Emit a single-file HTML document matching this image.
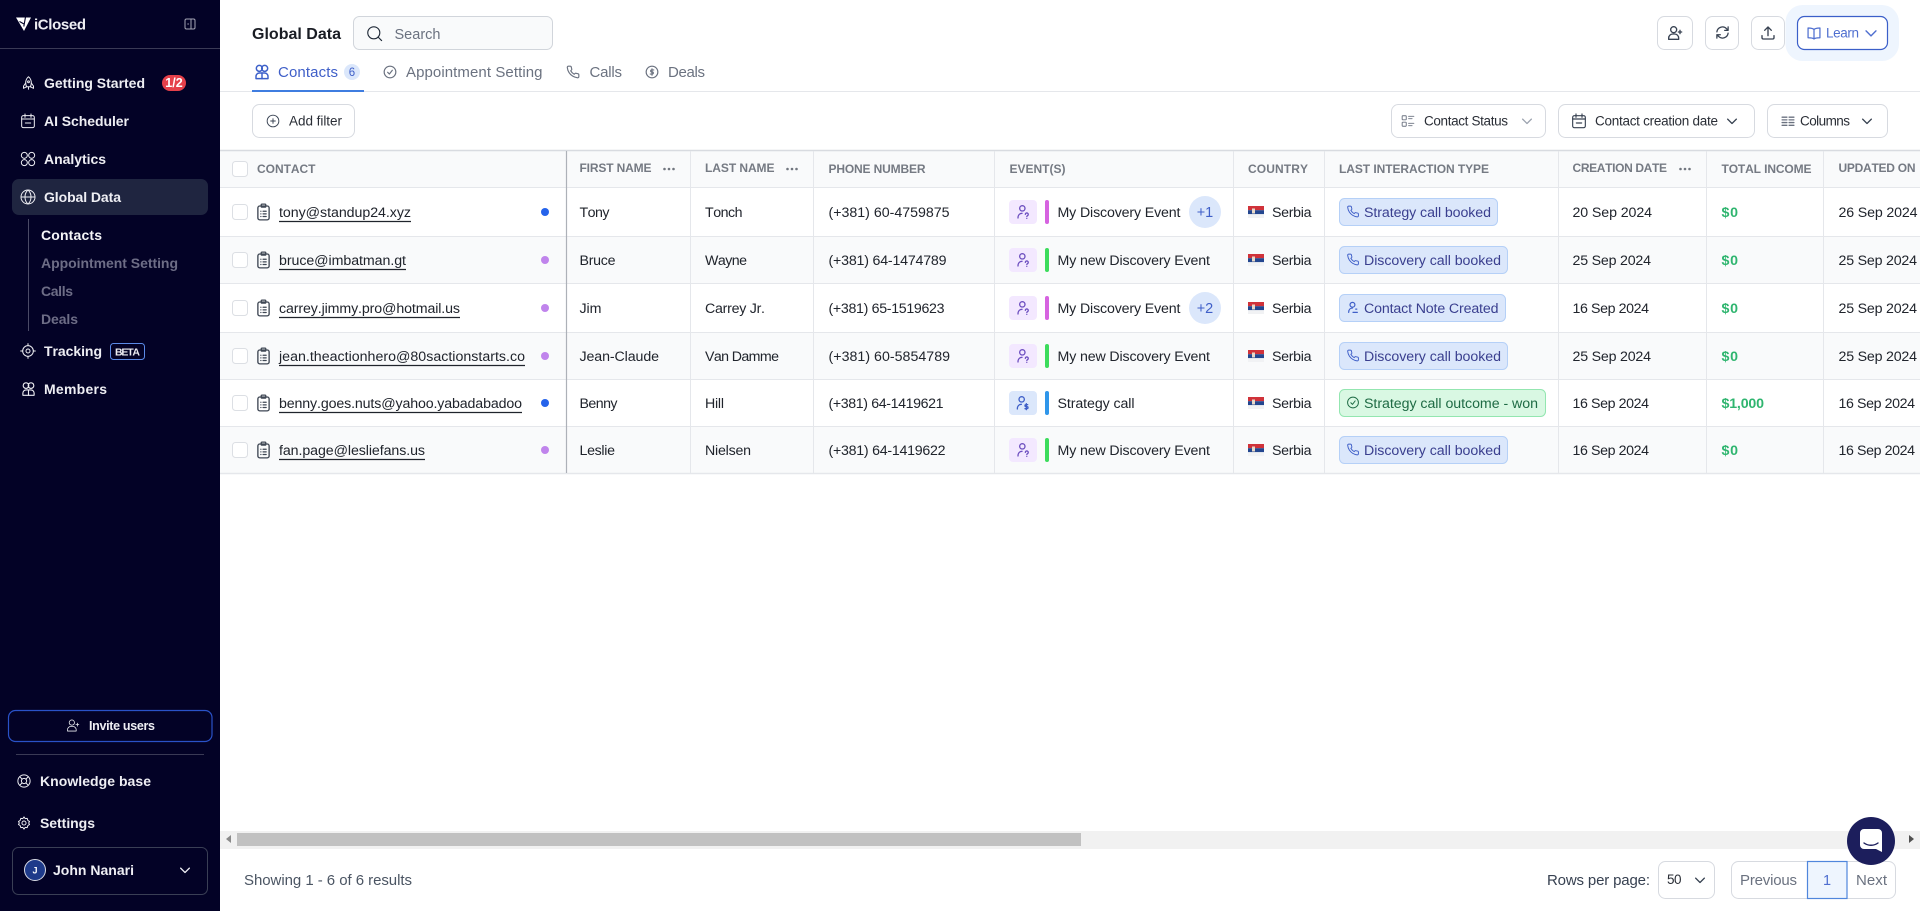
<!DOCTYPE html>
<html lang="en"><head><meta charset="utf-8"><title>Global Data</title>
<style>
html,body{margin:0;padding:0;background:#fff;overflow:hidden}
svg{display:block}
text{font-family:"Liberation Sans",sans-serif;font-kerning:none}
.c{font-size:14.2px;fill:#20242c}
.h{font-size:12px;font-weight:700;fill:#757a83}
.n{font-size:14px;font-weight:700;fill:#eeeef3}
.s{font-size:14px;font-weight:700;fill:#6d6d86}
.t{font-size:15px;fill:#6b7280}
.p{font-size:14.2px;fill:#3a3f8f}
.g{font-size:14.2px;fill:#1f6b45}
.m{font-size:14.2px;font-weight:700;fill:#2fb56f}
.i{fill:none;stroke-width:2;stroke-linecap:round;stroke-linejoin:round}
.box{fill:#fff;stroke:#d7dae0}
.cb{fill:#fff;stroke:#dcdfe4}
.u{stroke:#20242c;stroke-width:1.2}
</style></head><body>
<svg width="1920" height="911" viewBox="0 0 1920 911" xmlns="http://www.w3.org/2000/svg">
<defs>
<symbol id="chev" viewBox="0 0 24 24"><path d="M5 9l7 7 7-7"/></symbol>
<symbol id="phone" viewBox="0 0 24 24"><path d="M22 16.9v3a2 2 0 0 1-2.200 2 19.800 19.800 0 0 1-8.600-3 19.500 19.500 0 0 1-6-6 19.800 19.800 0 0 1-3-8.700A2 2 0 0 1 4.100 2h3a2 2 0 0 1 2 1.700c.1 1 .4 1.900.7 2.800a2 2 0 0 1-.4 2.100L8.100 9.900a16 16 0 0 0 6 6l1.300-1.300a2 2 0 0 1 2.100-.4c.9.300 1.800.6 2.800.7A2 2 0 0 1 22 16.900z"/></symbol>
<symbol id="check" viewBox="0 0 24 24"><circle cx="12" cy="12" r="10"/><path d="M8 12.500l3 3 5-6.500"/></symbol>
<symbol id="note" viewBox="0 0 24 24"><circle cx="11" cy="7" r="4.500"/><path d="M4 21c0-5 3-8 7-8"/><path d="M12 21h8M17 15l2 0"/></symbol>
<symbol id="clip" viewBox="0 0 18 24"><rect x="1.500" y="4" width="15" height="18.500" rx="2.500"/><rect x="6" y="1.500" width="6" height="4" rx="1"/><path d="M5.500 11h.01M5.500 14.500h.01M5.500 18h.01M8.500 11h4M8.500 14.500h4M8.500 18h4"/></symbol>
<symbol id="userq" viewBox="0 0 24 24"><circle cx="11" cy="6.500" r="4"/><path d="M4.500 21c0-4.500 2.500-7 6-7"/><path d="M15.500 15.500a2.200 2.200 0 1 1 3.300 2l-1.100 1M17.700 21.500v.01"/></symbol>
<symbol id="userd" viewBox="0 0 24 24"><circle cx="10" cy="6.500" r="4"/><path d="M3.500 21c0-4.500 2.500-7 6-7"/><path d="M19 14.500h-2.500a1.500 1.500 0 0 0 0 3h1.500a1.500 1.500 0 0 1 0 3H15M17 13v9"/></symbol>
<symbol id="users" viewBox="0 0 24 24"><circle cx="8" cy="6.500" r="4.500"/><circle cx="16" cy="6.500" r="4.500"/><path d="M3 22v-3.500a5 5 0 0 1 5-5h8a5 5 0 0 1 5 5V22z"/><path d="M12 13.500V22"/></symbol>
<symbol id="useradd" viewBox="0 0 24 24"><circle cx="10" cy="7" r="4.500"/><path d="M2.500 21.500v-2a6 6 0 0 1 6-6h3a6 6 0 0 1 6 6v2z"/><path d="M19.500 8v5M17 10.500h5"/></symbol>
<symbol id="dollar" viewBox="0 0 24 24"><circle cx="12" cy="12" r="10"/><path d="M15 8.500h-4a1.800 1.800 0 0 0 0 3.500h2a1.800 1.800 0 0 1 0 3.500H9M12 6.500v11"/></symbol>
<symbol id="plusc" viewBox="0 0 24 24"><circle cx="12" cy="12" r="10"/><path d="M12 8v8M8 12h8"/></symbol>
<symbol id="search" viewBox="0 0 24 24"><circle cx="11" cy="11" r="8.500"/><path d="M17.500 17.500L22 22"/></symbol>
<symbol id="sync" viewBox="0 0 24 24"><path d="M3 11a9 9 0 0 1 15.500-5L21 8.500M21 3v5.500h-5.500"/><path d="M21 13a9 9 0 0 1-15.500 5L3 15.500M3 21v-5.500h5.500"/></symbol>
<symbol id="upload" viewBox="0 0 24 24"><path d="M12 16V3M7 8l5-5 5 5M3 16v3a2 2 0 0 0 2 2h14a2 2 0 0 0 2-2v-3"/></symbol>
<symbol id="book" viewBox="0 0 24 24"><path d="M12 6.500C10.500 4.500 7 4 2.500 4v15.500c4.500 0 8 .5 9.500 2 1.500-1.500 5-2 9.500-2V4C17 4 13.500 4.500 12 6.500zM12 6.500v15"/></symbol>
<symbol id="status" viewBox="0 0 24 24"><rect x="2" y="3" width="7" height="7" rx="1"/><rect x="2" y="14" width="7" height="7" rx="1"/><path d="M13 4h9M13 8h6M13 16h9M13 20h6"/></symbol>
<symbol id="cal" viewBox="0 0 24 24"><rect x="2.500" y="4" width="19" height="18" rx="2.500"/><path d="M7.500 1.500v5M16.500 1.500v5M2.500 9h19M8 15h8"/></symbol>
<symbol id="cols" viewBox="0 0 24 24"><path d="M1 4h9M1 9h9M1 14h9M1 19h9M14 4h9M14 9h9M14 14h9M14 19h9"/></symbol>
<symbol id="rocket" viewBox="0 0 24 24"><path d="M12 2c3 2.500 4.500 6 4.500 9.500 0 2.500-.7 4.800-1.500 6.500H9c-.8-1.700-1.500-4-1.500-6.500C7.500 8 9 4.500 12 2z"/><circle cx="12" cy="10" r="1.500"/><path d="M7.500 12L4 17v3.500l5-2.500M16.500 12l3.500 5v3.500L15 18M12 19v3"/></symbol>
<symbol id="grid4" viewBox="0 0 24 24"><circle cx="6.500" cy="6.500" r="4.500"/><circle cx="17.500" cy="6.500" r="4.500"/><circle cx="6.500" cy="17.500" r="4.500"/><circle cx="17.500" cy="17.500" r="4.500"/></symbol>
<symbol id="globe" viewBox="0 0 24 24"><circle cx="12" cy="12" r="10.500"/><path d="M1.500 12h21M12 1.500c3.500 3 4.500 6.500 4.500 10.500s-1 7.500-4.500 10.500C8.500 19.500 7.500 16 7.500 12S8.500 4.500 12 1.500z"/></symbol>
<symbol id="target" viewBox="0 0 24 24"><circle cx="12" cy="12" r="8"/><circle cx="12" cy="12" r="3"/><path d="M12 1v3M12 20v3M1 12h3M20 12h3"/></symbol>
<symbol id="life" viewBox="0 0 24 24"><circle cx="12" cy="12" r="10.500"/><circle cx="12" cy="12" r="4.500"/><path d="M4.600 4.600l4.200 4.200M15.200 15.200l4.200 4.200M19.400 4.600l-4.200 4.200M8.800 15.200l-4.200 4.200"/></symbol>
<symbol id="gear" viewBox="0 0 24 24"><circle cx="12" cy="12" r="3.500"/><path d="M12 1.500l2 3 3.500-.5 1 3.500 3 2-1.500 2.500 1.500 2.500-3 2-1 3.500-3.500-.5-2 3-2-3-3.500.5-1-3.500-3-2L4 12l-1.500-2.500 3-2 1-3.500 3.500.5z"/></symbol>
<symbol id="panel" viewBox="0 0 24 24"><rect x="2" y="2" width="20" height="20" rx="3"/><path d="M14 2v20M9 12l-1.500 0"/></symbol>
<g id="dots" fill="#71767f"><circle cx="-4.500" r="1.300"/><circle r="1.300"/><circle cx="4.500" r="1.300"/></g>
<g id="flag"><rect width="16" height="4.200" fill="#d0323a"/><rect y="4.200" width="16" height="4" fill="#23468f"/><rect y="8.200" width="16" height="3.800" fill="#f1f2f4"/><rect x="4" y="2.500" width="3" height="5" fill="#e8d9c8"/></g>
</defs>

<!-- main bg -->
<rect width="1920" height="911" fill="#fff"/>

<!-- header -->
<text x="252" y="39" font-size="16" font-weight="700" fill="#1a1d24" textLength="89">Global Data</text>
<rect x="353.500" y="16.500" width="199" height="33" rx="6" fill="#f9fafb" stroke="#d1d5db"/>
<use href="#search" x="366" y="25" width="17" height="17" class="i" stroke="#1f2937" style="stroke-width:1.600"/>
<text x="394.500" y="39" font-size="14.500" fill="#6b7280" textLength="46">Search</text>

<line x1="220" y1="91.500" x2="1920" y2="91.500" stroke="#e5e7eb"/>
<rect x="252" y="90" width="112" height="2" fill="#3f7de0"/>
<use href="#users" x="254" y="64" width="16" height="16" class="i" stroke="#3b5fc9" style="stroke-width:2.200"/>
<text x="278" y="77" class="t" style="fill:#3f5fc8" textLength="60">Contacts</text>
<circle cx="352" cy="72" r="8" fill="#dbe7fb"/>
<text x="352" y="76" font-size="11.500" fill="#3f5fc8" text-anchor="middle">6</text>
<use href="#check" x="383" y="65" width="14" height="14" class="i" stroke="#6b7280"/>
<text x="406" y="77" class="t" textLength="136.500">Appointment Setting</text>
<use href="#phone" x="566" y="65" width="14" height="14" class="i" stroke="#6b7280"/>
<text x="589.500" y="77" class="t" textLength="32.500">Calls</text>
<use href="#dollar" x="645" y="65" width="14" height="14" class="i" stroke="#6b7280"/>
<text x="668" y="77" class="t" textLength="37">Deals</text>

<!-- header buttons -->
<rect x="1657.500" y="16.500" width="35" height="33" rx="7" class="box"/>
<use href="#useradd" x="1667" y="25" width="16" height="16" class="i" stroke="#374151"/>
<rect x="1705.500" y="16.500" width="33" height="33" rx="7" class="box"/>
<use href="#sync" x="1715" y="25" width="15" height="15" class="i" stroke="#374151"/>
<rect x="1751.500" y="16.500" width="33" height="33" rx="7" class="box"/>
<use href="#upload" x="1760" y="25" width="16" height="16" class="i" stroke="#374151"/>
<rect x="1785.500" y="5" width="113.500" height="56" rx="17" fill="#eef5fe"/>
<rect x="1797.500" y="16.500" width="90" height="33" rx="7" fill="#fff" stroke="#3b5fc9" stroke-width="1.200"/>
<use href="#book" x="1806.500" y="25.500" width="15" height="15" class="i" stroke="#4f6fd0"/>
<text x="1826" y="37.500" font-size="13.500" fill="#4f6fd0" textLength="33">Learn</text>
<use href="#chev" x="1862.500" y="24.500" width="17" height="17" class="i" stroke="#4f6fd0"/>

<!-- toolbar -->
<rect x="252.500" y="104.500" width="102" height="33" rx="7" class="box"/>
<use href="#plusc" x="266" y="114" width="14" height="14" class="i" stroke="#374151" style="stroke-width:1.600"/>
<text x="289" y="125.500" font-size="13.500" fill="#2a2e36" textLength="53">Add filter</text>

<rect x="1391.500" y="104.500" width="154" height="33" rx="7" class="box"/>
<use href="#status" x="1401" y="114" width="14" height="14" class="i" stroke="#6b7280" style="stroke-width:1.600"/>
<text x="1424" y="125.500" font-size="13.500" fill="#2a2e36" textLength="84">Contact Status</text>
<use href="#chev" x="1519.500" y="113.500" width="15" height="15" class="i" stroke="#9ca3af"/>

<rect x="1558.500" y="104.500" width="196" height="33" rx="7" class="box"/>
<use href="#cal" x="1571" y="113" width="16" height="16" class="i" stroke="#374151" style="stroke-width:1.700"/>
<text x="1595" y="125.500" font-size="13.500" fill="#2a2e36" textLength="123">Contact creation date</text>
<use href="#chev" x="1724.500" y="113.500" width="15" height="15" class="i" stroke="#374151"/>

<rect x="1767.500" y="104.500" width="120" height="33" rx="7" class="box"/>
<use href="#cols" x="1781.500" y="115" width="13" height="13" class="i" stroke="#6b7280" style="stroke-width:2.400"/>
<text x="1800" y="125.500" font-size="13.500" fill="#2a2e36" textLength="50">Columns</text>
<use href="#chev" x="1859.500" y="113.500" width="15" height="15" class="i" stroke="#374151"/>

<!-- table backgrounds -->
<rect x="220" y="151" width="1700" height="36" fill="#f9fafb"/>
<rect x="220" y="237" width="1700" height="46" fill="#f9fafb"/>
<rect x="220" y="333" width="1700" height="46" fill="#f9fafb"/>
<rect x="220" y="427" width="1700" height="46" fill="#f9fafb"/>
<g stroke="#e5e7eb">
<line x1="220" y1="150.500" x2="1920" y2="150.500" stroke="#d8dbe0" stroke-width="1.500"/>
<line x1="220" y1="187.500" x2="1920" y2="187.500"/>
<line x1="220" y1="236.500" x2="1920" y2="236.500"/>
<line x1="220" y1="283.500" x2="1920" y2="283.500"/>
<line x1="220" y1="332.500" x2="1920" y2="332.500"/>
<line x1="220" y1="379.500" x2="1920" y2="379.500"/>
<line x1="220" y1="426.500" x2="1920" y2="426.500"/>
<line x1="220" y1="473.500" x2="1920" y2="473.500" stroke-width="1.500"/>
<line x1="690.500" y1="151" x2="690.500" y2="473"/>
<line x1="813.500" y1="151" x2="813.500" y2="473"/>
<line x1="994.500" y1="151" x2="994.500" y2="473"/>
<line x1="1233.500" y1="151" x2="1233.500" y2="473"/>
<line x1="1324.500" y1="151" x2="1324.500" y2="473"/>
<line x1="1558.500" y1="151" x2="1558.500" y2="473"/>
<line x1="1706.500" y1="151" x2="1706.500" y2="473"/>
<line x1="1823.500" y1="151" x2="1823.500" y2="473"/>
</g>
<line x1="566.500" y1="151" x2="566.500" y2="473" stroke="#adb1b8" stroke-width="1.200"/>

<!-- table head -->
<rect x="232.500" y="161.500" width="15" height="15" rx="3" class="cb"/>
<text x="257" y="173" class="h" textLength="58.500">CONTACT</text>
<text x="579.500" y="172" class="h" textLength="72">FIRST NAME</text>
<use href="#dots" x="669" y="169"/>
<text x="705" y="172" class="h" textLength="69.500">LAST NAME</text>
<use href="#dots" x="792" y="169"/>
<text x="828.500" y="173" class="h" textLength="97">PHONE NUMBER</text>
<text x="1009.500" y="173" class="h" textLength="56">EVENT(S)</text>
<text x="1248" y="173" class="h" textLength="60">COUNTRY</text>
<text x="1339" y="173" class="h" textLength="150">LAST INTERACTION TYPE</text>
<text x="1572.500" y="172" class="h" textLength="94.500">CREATION DATE</text>
<use href="#dots" x="1685" y="169"/>
<text x="1721.500" y="173" class="h" textLength="90">TOTAL INCOME</text>
<text x="1838.500" y="172" class="h" textLength="77">UPDATED ON</text>

<!-- row 1 -->
<rect x="232.500" y="204.500" width="15" height="15" rx="3" class="cb"/>
<use href="#clip" x="256.500" y="203" width="14" height="18" class="i" stroke="#3f4754" style="stroke-width:1.800"/>
<text x="279" y="217" class="c" textLength="132">tony@standup24.xyz</text><line x1="279" y1="221.500" x2="411" y2="221.500" class="u"/>
<circle cx="545" cy="212" r="4" fill="#2563eb"/>
<text x="579.500" y="217" class="c" textLength="30">Tony</text>
<text x="705" y="217" class="c" textLength="37.500">Tonch</text>
<text x="828.500" y="217" class="c" textLength="121">(+381) 60-4759875</text>
<rect x="1009" y="200" width="28" height="24" rx="4" fill="#f3e8ff"/>
<use href="#userq" x="1015" y="204" width="16" height="16" class="i" stroke="#6d4fc0"/>
<rect x="1045" y="200" width="4" height="24" rx="2" fill="#d663e0"/>
<text x="1057.500" y="217" class="c" textLength="123">My Discovery Event</text>
<circle cx="1205" cy="212" r="16" fill="#dbe7fb"/>
<text x="1205" y="217" font-size="14.500" fill="#3f5fc8" text-anchor="middle">+1</text>
<use href="#flag" x="1248" y="206"/>
<text x="1272" y="217" class="c" textLength="39.500">Serbia</text>
<rect x="1339.500" y="198.500" width="158" height="27" rx="5" fill="#dbe7fb" stroke="#b5d0f7"/>
<use href="#phone" x="1346.500" y="205" width="13" height="13" class="i" stroke="#3f5fc8" style="stroke-width:1.800"/>
<text x="1364" y="217" class="p" textLength="127">Strategy call booked</text>
<text x="1572.500" y="217" class="c" textLength="79.500">20 Sep 2024</text>
<text x="1721.500" y="217" class="m" textLength="16.500">$0</text>
<text x="1838.500" y="217" class="c" textLength="79">26 Sep 2024</text>

<!-- row 2 -->
<rect x="232.500" y="252.500" width="15" height="15" rx="3" class="cb"/>
<use href="#clip" x="256.500" y="251" width="14" height="18" class="i" stroke="#3f4754" style="stroke-width:1.800"/>
<text x="279" y="265" class="c" textLength="127">bruce@imbatman.gt</text><line x1="279" y1="269.500" x2="406" y2="269.500" class="u"/>
<circle cx="545" cy="260" r="4" fill="#c084ec"/>
<text x="579.500" y="265" class="c" textLength="36">Bruce</text>
<text x="705" y="265" class="c" textLength="42">Wayne</text>
<text x="828.500" y="265" class="c" textLength="118">(+381) 64-1474789</text>
<rect x="1009" y="248" width="28" height="24" rx="4" fill="#f3e8ff"/>
<use href="#userq" x="1015" y="252" width="16" height="16" class="i" stroke="#6d4fc0"/>
<rect x="1045" y="248" width="4" height="24" rx="2" fill="#3ddc5c"/>
<text x="1057.500" y="265" class="c" textLength="152.500">My new Discovery Event</text>
<use href="#flag" x="1248" y="254"/>
<text x="1272" y="265" class="c" textLength="39.500">Serbia</text>
<rect x="1339.500" y="246.500" width="168" height="27" rx="5" fill="#dbe7fb" stroke="#b5d0f7"/>
<use href="#phone" x="1346.500" y="253" width="13" height="13" class="i" stroke="#3f5fc8" style="stroke-width:1.800"/>
<text x="1364" y="265" class="p" textLength="137">Discovery call booked</text>
<text x="1572.500" y="265" class="c" textLength="78.500">25 Sep 2024</text>
<text x="1721.500" y="265" class="m" textLength="16.500">$0</text>
<text x="1838.500" y="265" class="c" textLength="78.500">25 Sep 2024</text>

<!-- row 3 -->
<rect x="232.500" y="300.500" width="15" height="15" rx="3" class="cb"/>
<use href="#clip" x="256.500" y="299" width="14" height="18" class="i" stroke="#3f4754" style="stroke-width:1.800"/>
<text x="279" y="313" class="c" textLength="181">carrey.jimmy.pro@hotmail.us</text><line x1="279" y1="317.500" x2="460" y2="317.500" class="u"/>
<circle cx="545" cy="308" r="4" fill="#c084ec"/>
<text x="579.500" y="313" class="c" textLength="22">Jim</text>
<text x="705" y="313" class="c" textLength="60">Carrey Jr.</text>
<text x="828.500" y="313" class="c" textLength="116">(+381) 65-1519623</text>
<rect x="1009" y="296" width="28" height="24" rx="4" fill="#f3e8ff"/>
<use href="#userq" x="1015" y="300" width="16" height="16" class="i" stroke="#6d4fc0"/>
<rect x="1045" y="296" width="4" height="24" rx="2" fill="#d663e0"/>
<text x="1057.500" y="313" class="c" textLength="123">My Discovery Event</text>
<circle cx="1205" cy="308" r="16" fill="#dbe7fb"/>
<text x="1205" y="313" font-size="14.500" fill="#3f5fc8" text-anchor="middle">+2</text>
<use href="#flag" x="1248" y="302"/>
<text x="1272" y="313" class="c" textLength="39.500">Serbia</text>
<rect x="1339.500" y="294.500" width="166" height="27" rx="5" fill="#dbe7fb" stroke="#b5d0f7"/>
<use href="#note" x="1346.500" y="301" width="13" height="13" class="i" stroke="#3f5fc8" style="stroke-width:2.200"/>
<text x="1364" y="313" class="p" textLength="134.500">Contact Note Created</text>
<text x="1572.500" y="313" class="c" textLength="76.500">16 Sep 2024</text>
<text x="1721.500" y="313" class="m" textLength="16.500">$0</text>
<text x="1838.500" y="313" class="c" textLength="78.500">25 Sep 2024</text>

<!-- row 4 -->
<rect x="232.500" y="348.500" width="15" height="15" rx="3" class="cb"/>
<use href="#clip" x="256.500" y="347" width="14" height="18" class="i" stroke="#3f4754" style="stroke-width:1.800"/>
<text x="279" y="361" class="c" textLength="246">jean.theactionhero@80sactionstarts.co</text><line x1="279" y1="365.500" x2="525" y2="365.500" class="u"/>
<circle cx="545" cy="356" r="4" fill="#c084ec"/>
<text x="579.500" y="361" class="c" textLength="79.500">Jean-Claude</text>
<text x="705" y="361" class="c" textLength="74">Van Damme</text>
<text x="828.500" y="361" class="c" textLength="121.500">(+381) 60-5854789</text>
<rect x="1009" y="344" width="28" height="24" rx="4" fill="#f3e8ff"/>
<use href="#userq" x="1015" y="348" width="16" height="16" class="i" stroke="#6d4fc0"/>
<rect x="1045" y="344" width="4" height="24" rx="2" fill="#3ddc5c"/>
<text x="1057.500" y="361" class="c" textLength="152.500">My new Discovery Event</text>
<use href="#flag" x="1248" y="350"/>
<text x="1272" y="361" class="c" textLength="39.500">Serbia</text>
<rect x="1339.500" y="342.500" width="168" height="27" rx="5" fill="#dbe7fb" stroke="#b5d0f7"/>
<use href="#phone" x="1346.500" y="349" width="13" height="13" class="i" stroke="#3f5fc8" style="stroke-width:1.800"/>
<text x="1364" y="361" class="p" textLength="137">Discovery call booked</text>
<text x="1572.500" y="361" class="c" textLength="78.500">25 Sep 2024</text>
<text x="1721.500" y="361" class="m" textLength="16.500">$0</text>
<text x="1838.500" y="361" class="c" textLength="78.500">25 Sep 2024</text>

<!-- row 5 -->
<rect x="232.500" y="395.500" width="15" height="15" rx="3" class="cb"/>
<use href="#clip" x="256.500" y="394" width="14" height="18" class="i" stroke="#3f4754" style="stroke-width:1.800"/>
<text x="279" y="408" class="c" textLength="243">benny.goes.nuts@yahoo.yabadabadoo</text><line x1="279" y1="412.500" x2="522" y2="412.500" class="u"/>
<circle cx="545" cy="403" r="4" fill="#2563eb"/>
<text x="579.500" y="408" class="c" textLength="38">Benny</text>
<text x="705" y="408" class="c" textLength="19">Hill</text>
<text x="828.500" y="408" class="c" textLength="115">(+381) 64-1419621</text>
<rect x="1009" y="391" width="28" height="24" rx="4" fill="#dbe7fb"/>
<use href="#userd" x="1015" y="395" width="16" height="16" class="i" stroke="#3f5fc8"/>
<rect x="1045" y="391" width="4" height="24" rx="2" fill="#2f96ea"/>
<text x="1057.500" y="408" class="c" textLength="77">Strategy call</text>
<use href="#flag" x="1248" y="397"/>
<text x="1272" y="408" class="c" textLength="39.500">Serbia</text>
<rect x="1339.500" y="389.500" width="206" height="27" rx="5" fill="#d9f8e3" stroke="#93e6b0"/>
<use href="#check" x="1346.500" y="396" width="13" height="13" class="i" stroke="#1f6b45" style="stroke-width:1.800"/>
<text x="1364" y="408" class="g" textLength="174">Strategy call outcome - won</text>
<text x="1572.500" y="408" class="c" textLength="76.500">16 Sep 2024</text>
<text x="1721.500" y="408" class="m" textLength="42.500">$1,000</text>
<text x="1838.500" y="408" class="c" textLength="76.500">16 Sep 2024</text>

<!-- row 6 -->
<rect x="232.500" y="442.500" width="15" height="15" rx="3" class="cb"/>
<use href="#clip" x="256.500" y="441" width="14" height="18" class="i" stroke="#3f4754" style="stroke-width:1.800"/>
<text x="279" y="455" class="c" textLength="146">fan.page@lesliefans.us</text><line x1="279" y1="459.500" x2="425" y2="459.500" class="u"/>
<circle cx="545" cy="450" r="4" fill="#c084ec"/>
<text x="579.500" y="455" class="c" textLength="35.500">Leslie</text>
<text x="705" y="455" class="c" textLength="46">Nielsen</text>
<text x="828.500" y="455" class="c" textLength="117">(+381) 64-1419622</text>
<rect x="1009" y="438" width="28" height="24" rx="4" fill="#f3e8ff"/>
<use href="#userq" x="1015" y="442" width="16" height="16" class="i" stroke="#6d4fc0"/>
<rect x="1045" y="438" width="4" height="24" rx="2" fill="#3ddc5c"/>
<text x="1057.500" y="455" class="c" textLength="152.500">My new Discovery Event</text>
<use href="#flag" x="1248" y="444"/>
<text x="1272" y="455" class="c" textLength="39.500">Serbia</text>
<rect x="1339.500" y="436.500" width="168" height="27" rx="5" fill="#dbe7fb" stroke="#b5d0f7"/>
<use href="#phone" x="1346.500" y="443" width="13" height="13" class="i" stroke="#3f5fc8" style="stroke-width:1.800"/>
<text x="1364" y="455" class="p" textLength="137">Discovery call booked</text>
<text x="1572.500" y="455" class="c" textLength="76.500">16 Sep 2024</text>
<text x="1721.500" y="455" class="m" textLength="16.500">$0</text>
<text x="1838.500" y="455" class="c" textLength="76.500">16 Sep 2024</text>

<!-- scrollbar -->
<rect x="220" y="831" width="1700" height="18" fill="#f1f1f1"/>
<rect x="237" y="833" width="844" height="13" fill="#c1c1c1"/>
<path d="M231 835v8l-5-4z" fill="#8a8a8a"/>
<path d="M1909 835v8l5-4z" fill="#505050"/>

<!-- footer -->
<text x="244" y="885" font-size="15" fill="#4b5563" textLength="168">Showing 1 - 6 of 6 results</text>
<text x="1547" y="885" font-size="15" fill="#374151" textLength="103">Rows per page:</text>
<rect x="1658.500" y="861.500" width="56" height="37" rx="7" class="box"/>
<text x="1667" y="884" font-size="13.500" fill="#2a2e36" textLength="14.500">50</text>
<use href="#chev" x="1692.500" y="872.500" width="15" height="15" class="i" stroke="#374151"/>
<rect x="1731.500" y="861.500" width="164" height="37" rx="7" class="box"/>
<text x="1740" y="885" font-size="15" fill="#6b7280" textLength="57">Previous</text>
<rect x="1807.500" y="861.500" width="39.500" height="37" fill="#eef5fe" stroke="#4f86dc" stroke-width="1.200"/>
<text x="1827" y="885" font-size="14.500" fill="#4f6fd0" text-anchor="middle">1</text>
<text x="1856" y="885" font-size="15" fill="#6b7280" textLength="31">Next</text>

<!-- chat bubble -->
<circle cx="1871" cy="841" r="24" fill="#1c1e5c"/>
<path d="M1864 829h14a4 4 0 0 1 4 4v19l-6-3h-12a4 4 0 0 1-4-4v-12a4 4 0 0 1 4-4z" fill="#fff"/>
<path d="M1864 843c4 3 10 3 14 0" fill="none" stroke="#1c1e5c" stroke-width="1.400" stroke-linecap="round"/>

<!-- sidebar -->
<rect width="220" height="911" fill="#030226"/>
<path d="M16 17.500H31L24 31z" fill="#fff"/>
<path d="M25.500 17L23.800 26.500M19.500 21.500l4.500 2.500" stroke="#030226" stroke-width="1.100" fill="none"/>
<text x="34" y="29.500" font-size="15" font-weight="700" fill="#eeeef3" textLength="52">iClosed</text>
<use href="#panel" x="184" y="18" width="12" height="12" class="i" stroke="#a6a6b5"/>
<line x1="0" y1="48.500" x2="220" y2="48.500" stroke="#3a3a55"/>

<use href="#rocket" x="21" y="75" width="15" height="16" class="i" stroke="#eeeef3" style="stroke-width:1.600"/>
<text x="44" y="88" class="n" textLength="101">Getting Started</text>
<rect x="162" y="75" width="24" height="16" rx="8" fill="#e5404a"/>
<text x="174" y="87" font-size="12.500" font-weight="700" fill="#fff" text-anchor="middle">1/2</text>
<use href="#cal" x="20" y="113" width="16" height="16" class="i" stroke="#eeeef3" style="stroke-width:1.500"/>
<text x="44" y="126" class="n" textLength="85">AI Scheduler</text>
<use href="#grid4" x="20" y="151" width="16" height="16" class="i" stroke="#eeeef3" style="stroke-width:1.500"/>
<text x="44" y="164" class="n" textLength="62">Analytics</text>
<rect x="12" y="179" width="196" height="36" rx="7" fill="#1f2540"/>
<use href="#globe" x="20" y="189" width="16" height="16" class="i" stroke="#eeeef3" style="stroke-width:1.500"/>
<text x="44" y="202" class="n" textLength="77">Global Data</text>
<line x1="28.500" y1="219" x2="28.500" y2="331" stroke="#4a4a66"/>
<text x="41" y="240" class="n" style="fill:#f5f5f7" textLength="61">Contacts</text>
<text x="41" y="268" class="s" textLength="137">Appointment Setting</text>
<text x="41" y="296" class="s" textLength="32">Calls</text>
<text x="41" y="324" class="s" textLength="37">Deals</text>
<use href="#target" x="20" y="343" width="16" height="16" class="i" stroke="#eeeef3" style="stroke-width:1.500"/>
<text x="44" y="356" class="n" textLength="58">Tracking</text>
<rect x="110.500" y="343.500" width="34" height="16" rx="3" fill="none" stroke="#5b8ae8"/>
<text x="115" y="355.500" font-size="10.500" font-weight="700" fill="#eeeef3" textLength="25">BETA</text>
<use href="#users" x="21" y="381" width="15" height="16" class="i" stroke="#eeeef3" style="stroke-width:1.800"/>
<text x="44" y="394" class="n" textLength="63">Members</text>

<rect x="8.500" y="710.500" width="203.500" height="31" rx="7" fill="none" stroke="#2a52c8" stroke-width="1.200"/>
<use href="#useradd" x="66" y="718" width="14" height="15" class="i" stroke="#e5e7eb" style="stroke-width:1.400"/>
<text x="89" y="730" font-size="12.500" font-weight="700" fill="#eeeef3" textLength="66">Invite users</text>
<line x1="16" y1="754.500" x2="204" y2="754.500" stroke="#3a3a55"/>
<use href="#life" x="17" y="774" width="14" height="14" class="i" stroke="#eeeef3" style="stroke-width:1.700"/>
<text x="40" y="786" class="n" textLength="111">Knowledge base</text>
<use href="#gear" x="17" y="816" width="14" height="14" class="i" stroke="#eeeef3" style="stroke-width:1.700"/>
<text x="40" y="828" class="n" textLength="55">Settings</text>
<rect x="12.500" y="847.500" width="195" height="47" rx="6" fill="none" stroke="#3a3f55"/>
<circle cx="35" cy="870" r="10.500" fill="#1e3a8a" stroke="#d8dbe6"/>
<text x="35" y="873.500" font-size="9" font-weight="700" fill="#fff" text-anchor="middle">J</text>
<text x="53" y="875" class="n" textLength="81">John Nanari</text>
<use href="#chev" x="177.500" y="862.500" width="15" height="15" class="i" stroke="#eeeef3"/>
</svg>
</body></html>
